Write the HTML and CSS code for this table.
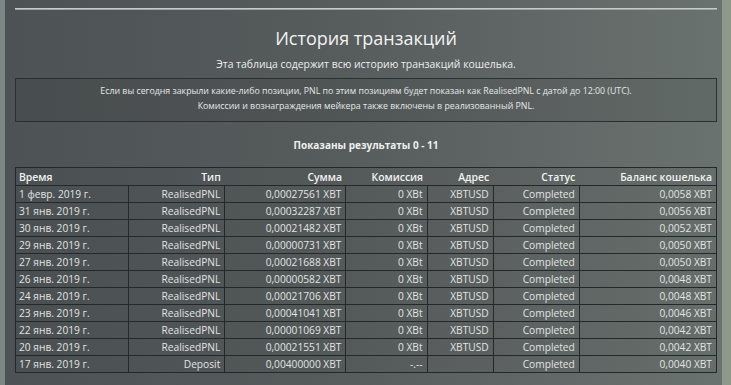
FILE: index.html
```html
<!DOCTYPE html>
<html lang="ru">
<head>
<meta charset="utf-8">
<link rel="stylesheet" href="styles.css">
</head>
<body>
<div class="panel">
  <div class="rule"></div>
  <h1 class="title">История транзакций</h1>
  <p class="subtitle">Эта таблица содержит всю историю транзакций кошелька.</p>
  <div class="notice">
    <p>Если вы сегодня закрыли какие-либо позиции, PNL по этим позициям будет показан как RealisedPNL с датой до 12:00 (UTC).</p>
    <p>Комиссии и вознаграждения мейкера также включены в реализованный PNL.</p>
  </div>
  <p class="results">Показаны результаты 0 - 11</p>
  <table class="tx">
    <colgroup>
      <col class="c-time"><col class="c-type"><col class="c-sum"><col class="c-fee"><col class="c-addr"><col class="c-status"><col class="c-bal">
    </colgroup>
    <thead>
      <tr><th class="left">Время</th><th>Тип</th><th>Сумма</th><th>Комиссия</th><th>Адрес</th><th>Статус</th><th>Баланс кошелька</th></tr>
    </thead>
    <tbody>
      <tr><td class="left">1 февр. 2019 г.</td><td>RealisedPNL</td><td>0,00027561 XBT</td><td>0 XBt</td><td>XBTUSD</td><td>Completed</td><td>0,0058 XBT</td></tr>
      <tr><td class="left">31 янв. 2019 г.</td><td>RealisedPNL</td><td>0,00032287 XBT</td><td>0 XBt</td><td>XBTUSD</td><td>Completed</td><td>0,0056 XBT</td></tr>
      <tr><td class="left">30 янв. 2019 г.</td><td>RealisedPNL</td><td>0,00021482 XBT</td><td>0 XBt</td><td>XBTUSD</td><td>Completed</td><td>0,0052 XBT</td></tr>
      <tr><td class="left">29 янв. 2019 г.</td><td>RealisedPNL</td><td>0,00000731 XBT</td><td>0 XBt</td><td>XBTUSD</td><td>Completed</td><td>0,0050 XBT</td></tr>
      <tr><td class="left">27 янв. 2019 г.</td><td>RealisedPNL</td><td>0,00021688 XBT</td><td>0 XBt</td><td>XBTUSD</td><td>Completed</td><td>0,0050 XBT</td></tr>
      <tr><td class="left">26 янв. 2019 г.</td><td>RealisedPNL</td><td>0,00000582 XBT</td><td>0 XBt</td><td>XBTUSD</td><td>Completed</td><td>0,0048 XBT</td></tr>
      <tr><td class="left">24 янв. 2019 г.</td><td>RealisedPNL</td><td>0,00021706 XBT</td><td>0 XBt</td><td>XBTUSD</td><td>Completed</td><td>0,0048 XBT</td></tr>
      <tr><td class="left">23 янв. 2019 г.</td><td>RealisedPNL</td><td>0,00041041 XBT</td><td>0 XBt</td><td>XBTUSD</td><td>Completed</td><td>0,0046 XBT</td></tr>
      <tr><td class="left">22 янв. 2019 г.</td><td>RealisedPNL</td><td>0,00001069 XBT</td><td>0 XBt</td><td>XBTUSD</td><td>Completed</td><td>0,0042 XBT</td></tr>
      <tr><td class="left">20 янв. 2019 г.</td><td>RealisedPNL</td><td>0,00021551 XBT</td><td>0 XBt</td><td>XBTUSD</td><td>Completed</td><td>0,0042 XBT</td></tr>
      <tr><td class="left">17 янв. 2019 г.</td><td>Deposit</td><td>0,00400000 XBT</td><td>-.--</td><td></td><td>Completed</td><td>0,0040 XBT</td></tr>
    </tbody>
  </table>
</div>
</body>
</html>
```
FILE: styles.css
```css
html, body {
  margin: 0;
  padding: 0;
}
body {
  width: 731px;
  height: 385px;
  overflow: hidden;
  background: linear-gradient(to right, #7d8685 0%, #87918a 60%, #8e988c 100%);
  font-family: "Open Sans", "Noto Sans", sans-serif;
  color: #e4e6e4;
}
.panel {
  margin-left: 5px;
  width: 702px;
  height: 380px;
  padding: 8px 5px 0 10px;
  box-sizing: content-box;
  background: linear-gradient(to right, #4d5255 0%, #565b5c 45%, #6a726f 100%);
}
.rule {
  height: 1px;
  border-bottom: 1px solid #9da39f;
  background: #c8ccc8;
}
.title {
  margin: 15px 0 0;
  font-size: 18px;
  font-weight: 400;
  line-height: 26px;
  text-align: center;
  color: #f2f3f2;
}
.subtitle {
  margin: 5px 0 0;
  font-size: 10.4px;
  line-height: 16px;
  text-align: center;
  color: #eceeec;
}
.notice {
  margin-top: 6px;
  height: 37px;
  border: 1px solid #2c2f30;
  background: rgba(0, 0, 0, 0.07);
  padding-top: 5px;
  box-sizing: content-box;
}
.notice p {
  margin: 0;
  font-size: 8.8px;
  line-height: 15px;
  text-align: center;
  color: #e6e8e6;
}
.results {
  margin: 15px 0 0;
  font-size: 10px;
  font-weight: 700;
  line-height: 16px;
  text-align: center;
  color: #eef0ee;
}
.tx {
  margin-top: 14px;
  width: 702px;
  table-layout: fixed;
  border-collapse: collapse;
  border: 1px solid #252828;
  font-size: 10.2px;
  background: rgba(0, 0, 0, 0.03);
}
.c-time { width: 113px; }
.c-type { width: 96px; }
.c-sum { width: 121px; }
.c-fee { width: 81px; }
.c-addr { width: 66px; }
.c-status { width: 86px; }
.c-bal { width: 137px; }
.tx th {
  height: 17px;
  padding: 0 4px 0 3px;
  font-size: 10.4px;
  font-weight: 600;
  text-align: right;
  color: #f2f3f2;
  border-bottom: 1px solid #252828;
  white-space: nowrap;
}
.tx td {
  height: 16px;
  padding: 0 4px 0 3px;
  line-height: 15px;
  text-align: right;
  color: #e2e4e2;
  border: 1px solid #252828;
  white-space: nowrap;
}
.tx .left {
  text-align: left;
}
```
